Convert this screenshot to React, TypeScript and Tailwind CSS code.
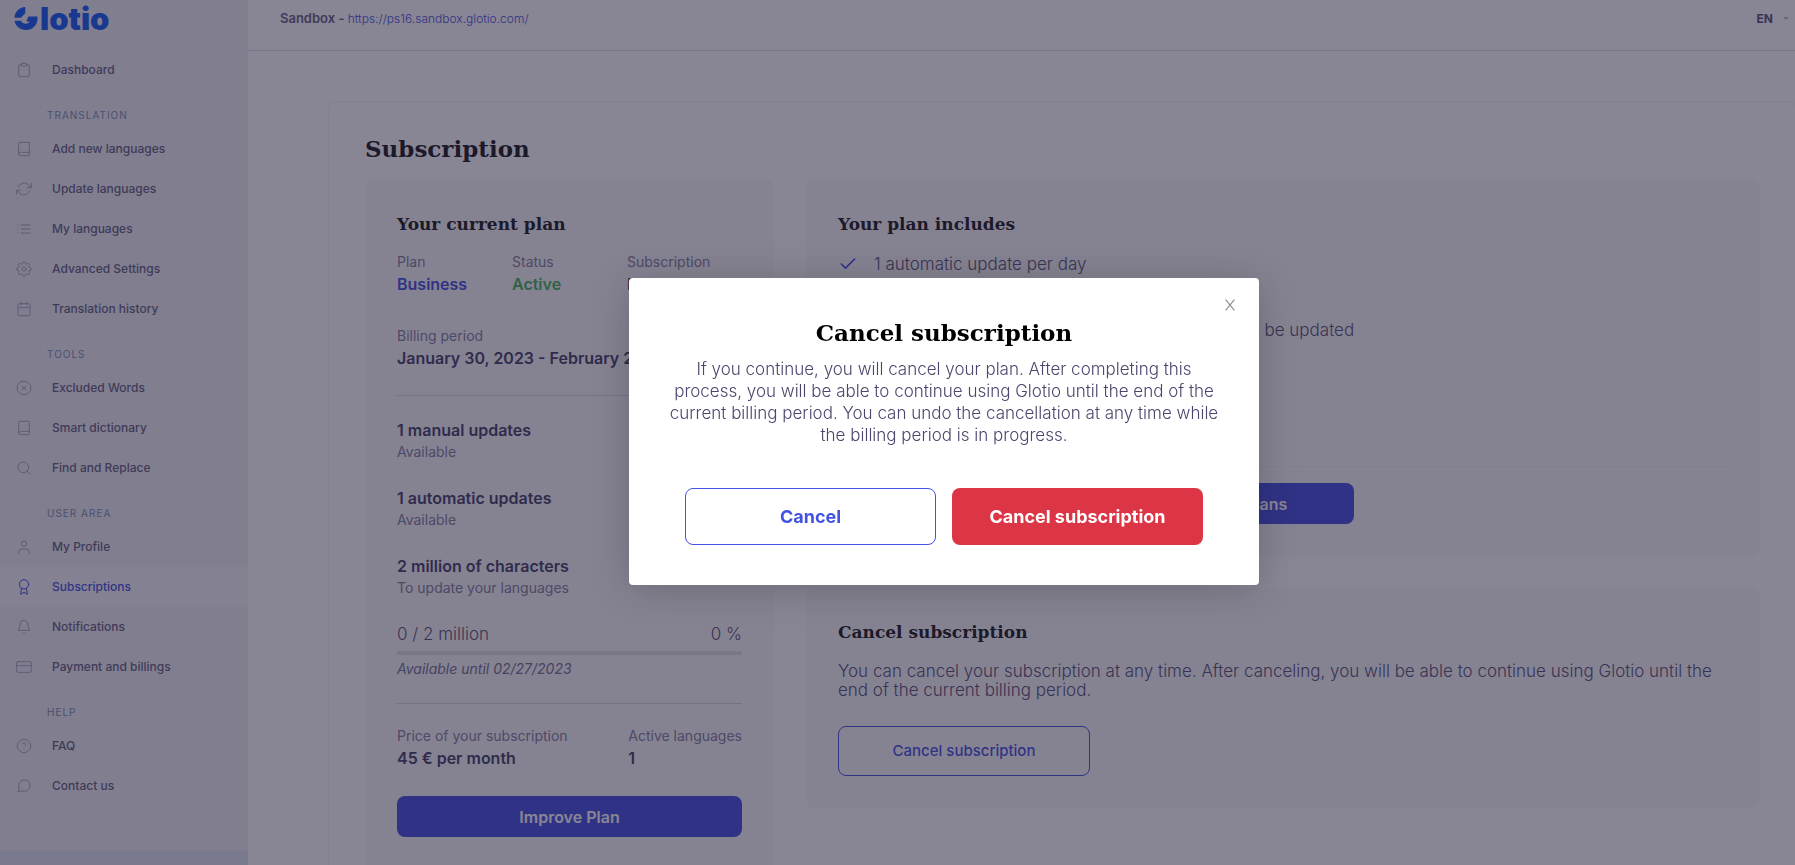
import { useState } from 'react';
import clsx from 'clsx';
import type { IconType } from 'react-icons';
import {
  FiAward,
  FiBell,
  FiBook,
  FiCalendar,
  FiCheck,
  FiClipboard,
  FiCreditCard,
  FiHelpCircle,
  FiList,
  FiMessageCircle,
  FiRefreshCw,
  FiSearch,
  FiSettings,
  FiUser,
  FiXOctagon
} from 'react-icons/fi';

interface MenuItem {
  label: string;
  icon: IconType;
  active?: boolean;
}

interface MenuGroup {
  title?: string;
  items: MenuItem[];
}

const menu: MenuGroup[] = [
  { items: [{ label: 'Dashboard', icon: FiClipboard }] },
  {
    title: 'TRANSLATION',
    items: [
      { label: 'Add new languages', icon: FiBook },
      { label: 'Update languages', icon: FiRefreshCw },
      { label: 'My languages', icon: FiList },
      { label: 'Advanced Settings', icon: FiSettings },
      { label: 'Translation history', icon: FiCalendar }
    ]
  },
  {
    title: 'TOOLS',
    items: [
      { label: 'Excluded Words', icon: FiXOctagon },
      { label: 'Smart dictionary', icon: FiBook },
      { label: 'Find and Replace', icon: FiSearch }
    ]
  },
  {
    title: 'USER AREA',
    items: [
      { label: 'My Profile', icon: FiUser },
      { label: 'Subscriptions', icon: FiAward, active: true },
      { label: 'Notifications', icon: FiBell },
      { label: 'Payment and billings', icon: FiCreditCard }
    ]
  },
  {
    title: 'HELP',
    items: [
      { label: 'FAQ', icon: FiHelpCircle },
      { label: 'Contact us', icon: FiMessageCircle }
    ]
  }
];

const usage = [
  { title: '1 manual updates', note: 'Available' },
  { title: '1 automatic updates', note: 'Available' },
  { title: '2 million of characters', note: 'To update your languages' }
];

const features = [
  '1 automatic update per day',
  '1 manual update per month',
  'Up to 2 million characters a month, for content to be updated',
  'Unlimited languages',
  'Smart dictionary',
  'Email support'
];

const Logo = () => (
  <a href="#" aria-label="Glotio" className="flex h-[50px] items-start gap-0.5 pt-[7px] pl-3.5 text-[#0052f4]">
    <svg viewBox="0 0 24 24" className="h-[23px] w-6" fill="currentColor">
      <path d="M0 11.200C.300 4.800 4.800.300 11.200 0v6.600L6.600 11.200z" />
      <path d="M0 14.400h6.600c1 2 3 3 5.200 3 2 0 3.400-.8 3.900-2.200L12.400 15l2-5H24v2.200C23.800 19 18.800 24 12 24 5.800 24 1 20 0 14.400z" />
    </svg>
    <span className="text-[31px] leading-[24px] font-black">lotio</span>
  </a>
);

const Sidebar = () => (
  <aside className="flex w-[248px] shrink-0 flex-col bg-[#ecf0f3]">
    <Logo />
    <nav>
      {menu.map((group, i) => (
        <div key={i}>
          {group.title && (
            <h3 className="pt-3 pl-[47px] text-[10px] leading-[27px] tracking-widest text-[#7488ab]">
              {group.title}
            </h3>
          )}
          {group.items.map(({ label, icon: Icon, active }) => (
            <a
              key={label}
              href="#"
              className={clsx(
                'flex h-10 items-center gap-5 pl-4 text-xs font-medium',
                active ? 'bg-[#f6f8fa] text-[#3745dc]' : 'text-[#5b567a]'
              )}
            >
              <Icon size={16} strokeWidth={1.5} className={active ? 'text-[#3745dc]' : 'text-[#a4a2b8]'} />
              {label}
            </a>
          ))}
        </div>
      ))}
    </nav>
    <div className="mt-auto h-3.5 bg-[#dde5ef]" />
  </aside>
);

const Topbar = () => (
  <header className="flex h-[51px] shrink-0 items-center justify-between border-b border-[#d8daea] pr-1.5 pb-3 pl-8">
    <p className="text-[13px] font-semibold text-[#5b567a]">
      Sandbox -{' '}
      <a href="#" className="text-xs font-light text-[#3745dc]">
        https://ps16.sandbox.glotio.com/
      </a>
    </p>
    <button className="flex items-center gap-2.5 text-xs font-bold text-[#4a4570]">
      EN
      <svg viewBox="0 0 6 4" className="h-1 w-1.5" fill="#a9bad6">
        <path d="M0 0h6L3 3z" />
      </svg>
    </button>
  </header>
);

const Field = ({ label, value, color = 'text-[#37325c]' }: { label: string; value: string; color?: string }) => (
  <div>
    <p className="text-sm leading-5 text-[#7a7696]">{label}</p>
    <p className={clsx('text-base leading-6 font-semibold', color)}>{value}</p>
  </div>
);

const CardTitle = ({ children }: { children: string }) => (
  <h2 className="font-['DejaVu_Serif'] text-[17px] leading-[25px] font-bold text-[#0a0a0a]">{children}</h2>
);

const CurrentPlan = () => (
  <section className="w-[409px] shrink-0 rounded-lg bg-[#f9fafb] p-8">
    <CardTitle>Your current plan</CardTitle>
    <div className="mt-[15px] grid grid-cols-3">
      <Field label="Plan" value="Business" color="text-[#3745dc]" />
      <Field label="Status" value="Active" color="text-[#38b04c]" />
      <Field label="Subscription" value="Monthly" />
    </div>
    <div className="mt-[30px]">
      <Field label="Billing period" value="January 30, 2023 - February 27, 2023" />
    </div>
    <hr className="mt-[25px] border-[#d3d4e2]" />
    <ul className="mt-[22px] flex flex-col gap-6">
      {usage.map(item => (
        <li key={item.title}>
          <p className="text-base leading-6 font-semibold text-[#37325c]">{item.title}</p>
          <p className="text-sm leading-5 text-[#7a7696]">{item.note}</p>
        </li>
      ))}
    </ul>
    <div className="mt-6 flex justify-between text-[17px] leading-6 font-light text-[#4b466d]">
      <span>0 / 2 million</span>
      <span>0 %</span>
    </div>
    <div className="mt-[5px] h-1 rounded-full bg-[#dcdce0]" />
    <p className="mt-1 text-sm leading-5 text-[#6b6788] italic">Available until 02/27/2023</p>
    <hr className="mt-6 border-[#d3d4e2]" />
    <div className="mt-[22px] flex justify-between">
      <Field label="Price of your subscription" value="45 € per month" />
      <Field label="Active languages" value="1" />
    </div>
    <button className="mt-[26px] h-[41px] w-full rounded-lg bg-[#3745dc] text-base font-semibold text-white">
      Improve Plan
    </button>
  </section>
);

const PlanIncludes = () => (
  <section className="rounded-lg bg-[#f9fafb] p-8">
    <CardTitle>Your plan includes</CardTitle>
    <ul className="mt-[15px] flex flex-col gap-[9px]">
      {features.map(text => (
        <li key={text} className="flex items-center gap-4 text-[17px] leading-6 font-light text-[#4b466d]">
          <FiCheck size={20} strokeWidth={2} className="text-[#3745dc]" />
          {text}
        </li>
      ))}
    </ul>
    <hr className="mt-[25px] border-[#f0f1f4]" />
    <button className="mt-4 ml-[266px] h-[41px] w-[250px] rounded-lg bg-[#3745dc] text-base font-semibold text-white">
      Compare plans
    </button>
  </section>
);

const CancelCard = ({ onCancel }: { onCancel: () => void }) => (
  <section className="rounded-lg bg-[#f9fafb] p-8">
    <CardTitle>Cancel subscription</CardTitle>
    <p className="mt-[17px] text-[17px] leading-[19px] font-light text-[#4b466d]">
      You can cancel your subscription at any time. After canceling, you will be able to continue using Glotio until
      the end of the current billing period.
    </p>
    <button
      onClick={onCancel}
      className="mt-[26px] h-[50px] w-[252px] rounded-lg border border-[#3745dc] text-[15px] font-medium text-[#3745dc]"
    >
      Cancel subscription
    </button>
  </section>
);

const CancelModal = ({ onClose }: { onClose: () => void }) => (
  <div className="fixed inset-0 flex items-center justify-center bg-[#2b2640]/56 pb-0.5 pl-[93px]">
    <div
      role="dialog"
      aria-modal="true"
      aria-labelledby="cancel-title"
      className="relative w-[630px] rounded bg-white px-10 py-10 text-center shadow-[0_4px_40px_rgba(0,0,0,0.2)]"
    >
      <button
        onClick={onClose}
        aria-label="Close"
        className="absolute top-4 right-[18px] flex size-[22px] items-center justify-center text-[#8c8c8c]"
      >
        <svg viewBox="0 0 10 12" className="h-3 w-2.5" fill="none" stroke="currentColor" strokeWidth="1.1">
          <path d="M.6.6l8.800 10.800M9.400.6L.6 11.400" />
        </svg>
      </button>
      <h2 id="cancel-title" className="font-['DejaVu_Serif'] text-[23px] leading-[30px] font-bold text-black">
        Cancel subscription
      </h2>
      <p className="mt-2.5 text-[17px] leading-[22px] font-light text-[#4b466d]">
        If you continue, you will cancel your plan. After completing this process, you will be able to continue using
        Glotio until the end of the current billing period. You can undo the cancellation at any time while the billing
        period is in progress.
      </p>
      <div className="mt-[42px] grid grid-cols-2 gap-4 px-4 text-lg font-bold">
        <button onClick={onClose} className="h-[57px] rounded-lg border border-[#4353e1] text-[#4353e1]">
          Cancel
        </button>
        <button onClick={onClose} className="h-[57px] rounded-lg bg-[#dc3545] text-white">
          Cancel subscription
        </button>
      </div>
    </div>
  </div>
);

const App = () => {
  const [open, setOpen] = useState(true);

  return (
    <div className="flex h-screen overflow-hidden bg-white font-[Inter,sans-serif]">
      <Sidebar />
      <div className="flex min-w-0 flex-1 flex-col overflow-hidden">
        <Topbar />
        <main className="mt-[50px] -mr-0.5 ml-20 rounded-lg border border-[#f1f2f6] px-9 py-8">
          <h1 className="font-['DejaVu_Serif'] text-[23px] leading-[30px] font-bold text-[#0a0a0a]">Subscription</h1>
          <div className="mt-4 flex gap-8">
            <CurrentPlan />
            <div className="flex min-w-0 flex-1 flex-col gap-8">
              <PlanIncludes />
              <CancelCard onCancel={() => setOpen(true)} />
            </div>
          </div>
        </main>
      </div>
      {open && <CancelModal onClose={() => setOpen(false)} />}
    </div>
  );
};

export default App;
